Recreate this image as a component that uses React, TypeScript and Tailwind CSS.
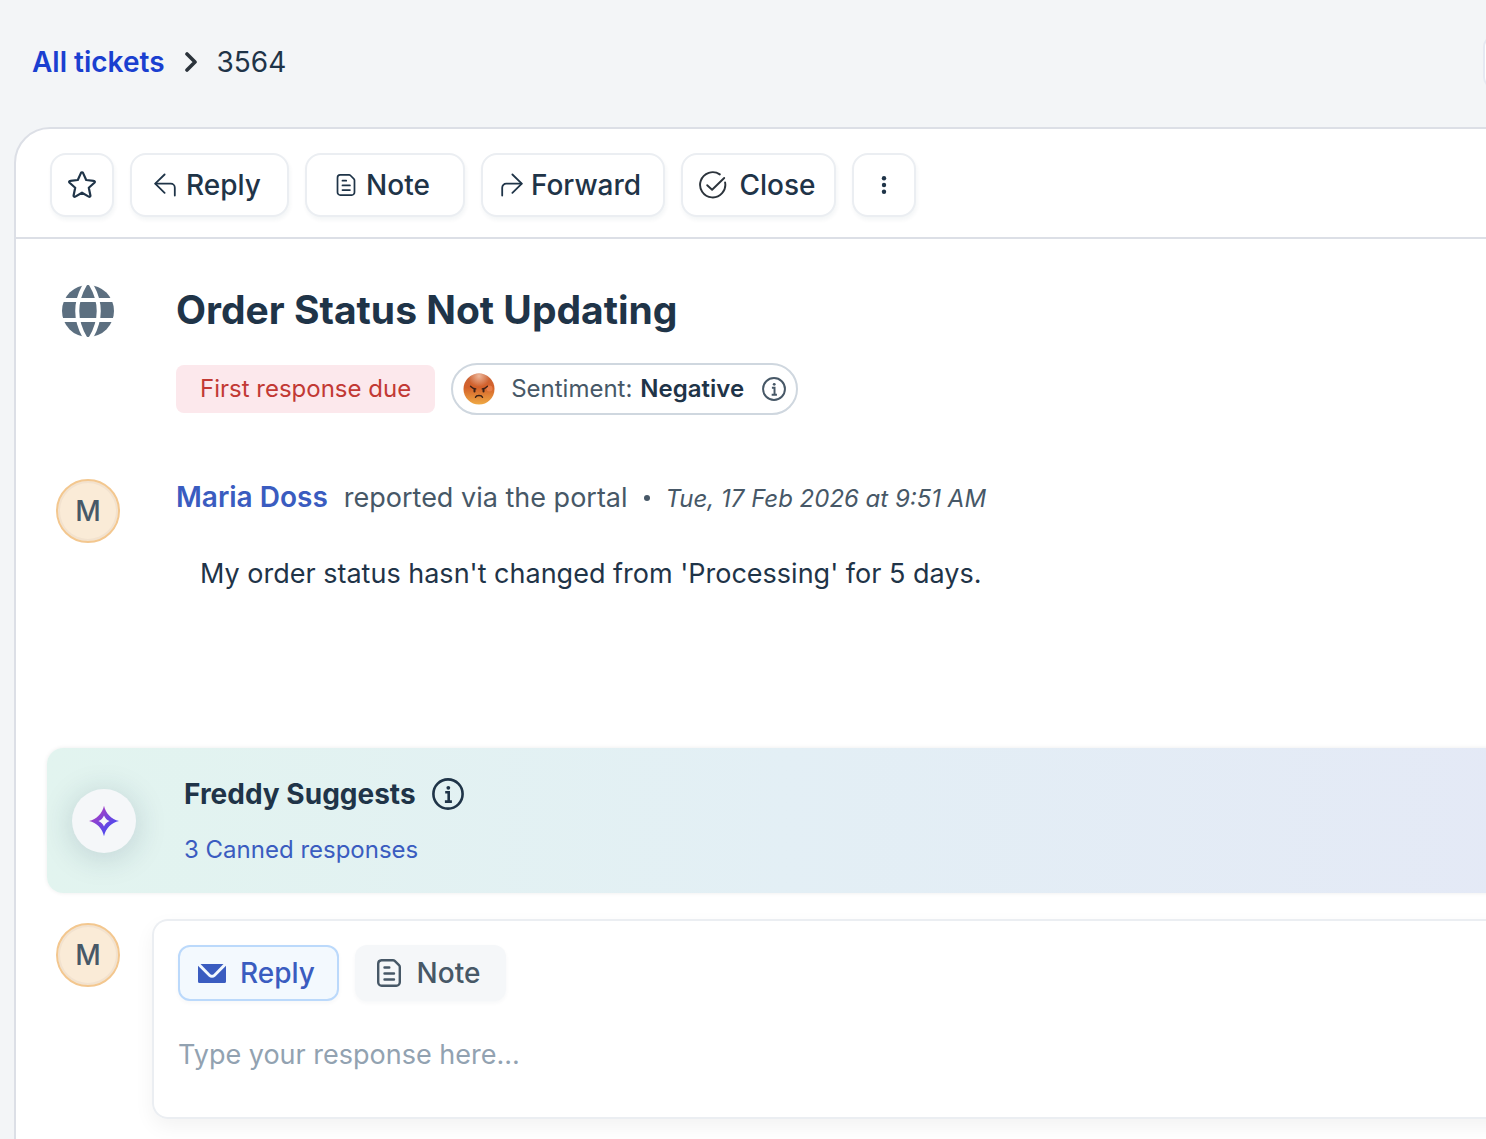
import type { ReactNode } from "react";

function StarIcon() {
  return (
    <svg viewBox="0 0 28 28" className="size-7" fill="none" stroke="currentColor" strokeWidth="2.200" strokeLinejoin="round" aria-hidden="true">
      <path d="M12.9 2.1c.5-1 1.700-1 2.200 0l3.100 6.900 7.500.8c1.200.1 1.500 1.200.7 2l-5.600 5 1.600 7.600c.2 1.100-.8 1.700-1.700 1.200L14 21.700l-6.700 3.900c-.9.500-1.900-.1-1.700-1.200l1.600-7.600-5.600-5c-.8-.8-.5-1.900.7-2l7.500-.8z" />
    </svg>
  );
}

function ReplyIcon() {
  return (
    <svg viewBox="0 0 22 24" className="h-6 w-[22px]" fill="none" stroke="currentColor" strokeWidth="1.800" strokeLinecap="round" strokeLinejoin="round" aria-hidden="true">
      <path d="M10.600 1.500 1.200 10.700l9.400 9.200" />
      <path d="M1.600 10.700h15.200a4 4 0 0 1 4 4v7.800" />
    </svg>
  );
}

function ForwardIcon() {
  return (
    <svg viewBox="0 0 22 24" className="h-6 w-[22px]" fill="none" stroke="currentColor" strokeWidth="1.800" strokeLinecap="round" strokeLinejoin="round" aria-hidden="true">
      <path d="m11.400 1.500 9.400 9.200-9.400 9.200" />
      <path d="M20.400 10.700H5.200a4 4 0 0 0-4 4v7.800" />
    </svg>
  );
}

function NoteIcon({ className, strokeWidth }: { className: string; strokeWidth: number }) {
  return (
    <svg viewBox="0 0 24 28" className={className} fill="none" stroke="currentColor" strokeWidth={strokeWidth} strokeLinecap="round" strokeLinejoin="round" aria-hidden="true">
      <path d="M4.500 1.200h11.400c.7 0 1.300.2 1.800.7l4.300 4.200c.5.5.8 1.100.8 1.800v15.400a3.500 3.500 0 0 1-3.500 3.500H4.700a3.500 3.500 0 0 1-3.500-3.500V4.700a3.500 3.500 0 0 1 3.300-3.500z" />
      <path d="M7.500 8.500h4.800M7.500 14.500h9.500M7.500 20.500h9.500" />
    </svg>
  );
}

function CheckIcon() {
  return (
    <svg viewBox="0 0 28 28" className="size-7 text-[#2b333b]" fill="none" stroke="currentColor" strokeWidth="1.900" strokeLinecap="round" strokeLinejoin="round" aria-hidden="true">
      <path d="M26.100 11.500A12.600 12.600 0 1 1 20.800 3.400" />
      <path d="m8.200 14.200 4.900 4.500L25.200 7" />
    </svg>
  );
}

function MoreIcon() {
  return (
    <svg viewBox="0 0 6 18" className="h-[18px] w-1.5" fill="currentColor" aria-hidden="true">
      <circle cx="3" cy="2.200" r="2.200" />
      <circle cx="3" cy="9" r="2.200" />
      <circle cx="3" cy="15.800" r="2.200" />
    </svg>
  );
}

function GlobeIcon() {
  return (
    <svg viewBox="0 0 52 52" className="size-[52px]" aria-hidden="true">
      <circle cx="26" cy="26" r="26" fill="#5c6f80" />
      <g fill="none" stroke="#fff" strokeWidth="4">
        <path d="M0 15h52M0 35h52" />
        <path d="M24.500 -3Q6 26 24.500 55M27.500 -3Q46 26 27.500 55" />
      </g>
    </svg>
  );
}

function InfoIcon({ className }: { className: string }) {
  return (
    <svg viewBox="0 0 32 32" className={className} fill="none" stroke="currentColor" strokeWidth="2.600" aria-hidden="true">
      <circle cx="16" cy="16" r="14.600" />
      <circle cx="16.300" cy="9.800" r="1.900" fill="currentColor" stroke="none" />
      <path d="M13.200 14.300h3.500v9M12.900 23.600h7" />
    </svg>
  );
}

function AngryFace() {
  return (
    <svg viewBox="0 0 32 32" className="size-8" aria-hidden="true">
      <defs>
        <linearGradient id="face" x1="0" y1="0" x2="0" y2="1">
          <stop offset="0" stopColor="#c9653a" />
          <stop offset=".45" stopColor="#d4612a" />
          <stop offset="1" stopColor="#efa944" />
        </linearGradient>
        <radialGradient id="shine" cx=".5" cy=".08" r=".35">
          <stop offset="0" stopColor="#f3c0a4" stopOpacity=".9" />
          <stop offset="1" stopColor="#f3c0a4" stopOpacity="0" />
        </radialGradient>
      </defs>
      <circle cx="16" cy="16" r="15.500" fill="url(#face)" />
      <circle cx="16" cy="16" r="15.500" fill="url(#shine)" />
      <circle cx="26.500" cy="15.500" r="3" fill="#ee8350" opacity=".8" />
      <g stroke="#3b2117" fill="none" strokeLinecap="round">
        <path d="M7.500 13.200c1.500 1.700 3.300 2.500 5.300 2.700M24.500 13.200c-1.500 1.700-3.300 2.500-5.300 2.700" strokeWidth="1.300" />
        <path d="M11.500 16.200v2.300M20.500 16.200v2.300" strokeWidth="2" />
        <path d="M12.500 24.300c.9-2.300 6.100-2.300 7 0" strokeWidth="1.500" />
      </g>
    </svg>
  );
}

function SparkIcon() {
  return (
    <svg viewBox="0 0 32 32" className="size-8" aria-hidden="true">
      <defs>
        <linearGradient id="spark" x1=".2" y1=".2" x2=".75" y2=".8">
          <stop offset="0" stopColor="#a63fc4" />
          <stop offset="1" stopColor="#4a49f0" />
        </linearGradient>
      </defs>
      <path fill="url(#spark)" fillRule="evenodd" d="M16 .8c1.600 7.600 7.400 13.600 15 15.200-7.600 1.600-13.400 7.600-15 15.200C14.400 23.600 8.600 17.600 1 16 8.600 14.400 14.400 8.400 16 .8zm0 9.600c-1 2.600-3 4.600-5.600 5.600 2.600 1 4.600 3 5.600 5.600 1-2.600 3-4.600 5.600-5.600-2.600-1-4.600-3-5.600-5.600z" />
    </svg>
  );
}

function MailIcon() {
  return (
    <svg viewBox="0 0 28 19" className="h-[19px] w-7" fill="currentColor" aria-hidden="true">
      <path d="M2.500 0h23l-9.700 9.900a2.600 2.600 0 0 1-3.600 0z" />
      <path d="M0 1.800 10.700 12.500a4.700 4.700 0 0 0 6.600 0L28 1.800V17.500a1.500 1.500 0 0 1-1.500 1.500h-25A1.500 1.500 0 0 1 0 17.500z" />
    </svg>
  );
}

function ToolButton({ className, label, children }: { className: string; label?: string; children: ReactNode }) {
  return (
    <button
      type="button"
      aria-label={label}
      className={`flex h-16 shrink-0 items-center justify-center rounded-2xl border-2 border-[#ebeef2] bg-white font-medium shadow-[1px_3px_4px_rgba(18,52,77,0.05)] ${className}`}
    >
      {children}
    </button>
  );
}

function Avatar() {
  return (
    <div className="flex size-16 shrink-0 items-center justify-center rounded-full border-2 border-[#f3c78f] bg-[#faebd7] font-medium text-[#475867] shadow-[inset_0_0_0_2px_#f2e2cf]">
      M
    </div>
  );
}

export default function App() {
  return (
    <div className="flex min-h-screen flex-col overflow-hidden bg-[#f3f5f7] font-['Inter',sans-serif] text-[28px] leading-9 text-[#1f3448]">
      <header className="flex h-[127px] items-center justify-between pb-[3px] pl-8">
        <nav aria-label="Breadcrumb" className="flex items-center">
          <a href="#tickets" className="font-semibold text-[#1a3fd0]">All tickets</a>
          <svg viewBox="0 0 12 20" className="mx-5 h-5 w-3" fill="none" stroke="#2b333b" strokeWidth="3.600" strokeLinecap="round" strokeLinejoin="round" aria-hidden="true">
            <path d="m2 2 8 8-8 8" />
          </svg>
          <span>3564</span>
        </nav>
        <button type="button" aria-label="Search" className="-mr-[61px] h-[54px] w-16 rounded-xl border-2 border-[#e6e9f2] bg-white" />
      </header>

      <main className="-mr-10 ml-3.5 flex grow flex-col rounded-tl-[36px] border-2 border-[#dcdfe6] bg-white pr-10">
        <div className="-mr-10 flex h-[110px] items-center gap-4 border-b-2 border-[#dcdfe6] pt-1 pl-[34px]">
          <ToolButton className="w-16" label="Star ticket"><StarIcon /></ToolButton>
          <ToolButton className="w-[159px] gap-2.5 pr-1"><ReplyIcon />Reply</ToolButton>
          <ToolButton className="w-40 gap-2.5 pr-1"><NoteIcon className="h-[22px] w-5" strokeWidth={2.2} />Note</ToolButton>
          <ToolButton className="w-46 gap-2 pr-1"><ForwardIcon />Forward</ToolButton>
          <ToolButton className="w-[155px] gap-3 pr-0.5"><CheckIcon />Close</ToolButton>
          <ToolButton className="w-16" label="More actions"><MoreIcon /></ToolButton>
        </div>

        <section className="flex pt-9 pl-10">
          <div className="flex w-[120px] shrink-0 pt-2.5 pl-1.5"><GlobeIcon /></div>
          <div>
            <h1 className="text-[39px] leading-[70px] font-bold">Order Status Not Updating</h1>
            <div className="mt-4.5 flex items-center gap-4 text-2xl">
              <span className="flex h-12 items-center rounded-lg bg-[#fce8ec] px-6 text-[#c23934]">First response due</span>
              <span className="flex h-[52px] items-center rounded-full border-2 border-[#cfd7df] pr-2.5 pl-2.5 text-[#475867]">
                <AngryFace />
                <span className="ml-4">Sentiment:</span>
                <strong className="mr-[18px] ml-2 font-semibold text-[#1f3448]">Negative</strong>
                <InfoIcon className="size-6" />
              </span>
            </div>
          </div>
        </section>

        <article className="flex pt-16 pl-10">
          <div className="w-[120px] shrink-0"><Avatar /></div>
          <div>
            <p className="flex items-baseline text-[#475867]">
              <a href="#requester" className="font-semibold text-[#3a5cc0]">Maria Doss</a>
              <span className="ml-4 text-[27px]">reported via the portal</span>
              <span className="mx-4 size-1.5 self-center rounded-full bg-[#475867]" />
              <time className="text-2xl italic">Tue, 17 Feb 2026 at 9:51 AM</time>
            </p>
            <p className="mt-10 pl-6 text-[27px]">My order status hasn't changed from 'Processing' for 5 days.</p>
          </div>
        </article>

        <section className="mt-39 -mr-10 ml-[31px] flex h-[145px] rounded-l-2xl bg-linear-to-r from-[#e2f4ef] via-[#e3eff5] via-50% to-[#e4e9f6] pl-[25px] shadow-[0_0_4px_rgba(0,0,0,0.08)]">
          <div className="mt-[41px] flex size-16 shrink-0 items-center justify-center rounded-full bg-[#f5f7f9] shadow-[0_4px_32px_rgba(18,52,77,0.18)]">
            <SparkIcon />
          </div>
          <div className="pt-7 pl-12">
            <h2 className="flex items-center gap-4 font-bold">
              Freddy Suggests
              <InfoIcon className="size-8" />
            </h2>
            <a href="#canned" className="mt-[22px] block text-2xl text-[#3a5cc0]">3 Canned responses</a>
          </div>
        </section>

        <section className="-mr-10 flex pt-[26px] pl-10">
          <div className="w-24 shrink-0 pt-1"><Avatar /></div>
          <div className="mb-5 h-[200px] grow rounded-l-2xl border-2 border-r-0 border-[#ebeef2] px-6 pt-6 shadow-[0_8px_20px_rgba(0,0,0,0.05)]">
            <div className="flex gap-4 font-medium">
              <button type="button" className="flex h-14 w-[161px] items-center justify-center gap-3.5 rounded-xl border-2 border-[#bbd9fb] bg-[#f3f9fe] pr-1 text-[#3a5cc0] shadow-[0_2px_4px_rgba(18,52,77,0.04)]">
                <MailIcon />Reply
              </button>
              <button type="button" className="flex h-14 w-[151px] items-center justify-center gap-4 rounded-xl bg-[#f5f7f9] pr-1 text-[#475867] shadow-[0_2px_4px_rgba(18,52,77,0.04)]">
                <NoteIcon className="h-7 w-6" strokeWidth={2.4} />Note
              </button>
            </div>
            <textarea aria-label="Response" placeholder="Type your response here..." className="mt-9 block h-11 w-full resize-none bg-transparent text-[27px] outline-none placeholder:text-[#92a2b1]" />
          </div>
        </section>
      </main>
    </div>
  );
}
